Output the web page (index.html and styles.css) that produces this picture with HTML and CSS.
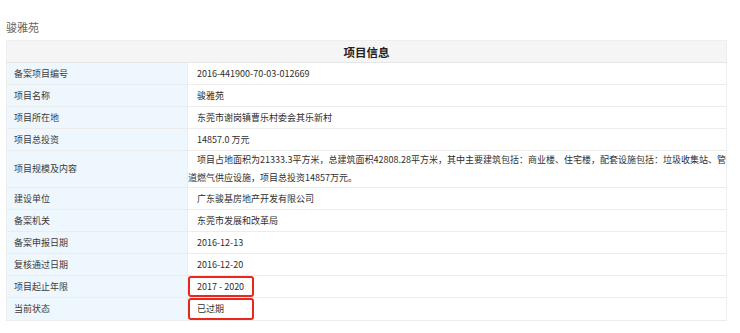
FILE: index.html
```html
<!DOCTYPE html>
<html lang="zh-CN">
<head>
<meta charset="utf-8">
<link rel="stylesheet" href="styles.css">
</head>
<body>
<div class="page">
  <div class="title">骏雅苑</div>
  <table class="info">
    <thead>
      <tr><th colspan="2">项目信息</th></tr>
    </thead>
    <tbody>
      <tr><td class="lbl">备案项目编号</td><td class="val">2016-441900-70-03-012669</td></tr>
      <tr><td class="lbl">项目名称</td><td class="val">骏雅苑</td></tr>
      <tr><td class="lbl">项目所在地</td><td class="val">东莞市谢岗镇曹乐村委会其乐新村</td></tr>
      <tr><td class="lbl">项目总投资</td><td class="val">14857.0 万元</td></tr>
      <tr class="tall"><td class="lbl">项目规模及内容</td><td class="val para">项目占地面积为21333.3平方米，总建筑面积42808.28平方米，其中主要建筑包括：商业楼、住宅楼，配套设施包括：垃圾收集站、管道燃气供应设施，项目总投资14857万元。</td></tr>
      <tr><td class="lbl">建设单位</td><td class="val">广东骏基房地产开发有限公司</td></tr>
      <tr><td class="lbl">备案机关</td><td class="val">东莞市发展和改革局</td></tr>
      <tr><td class="lbl">备案申报日期</td><td class="val">2016-12-13</td></tr>
      <tr><td class="lbl">复核通过日期</td><td class="val">2016-12-20</td></tr>
      <tr><td class="lbl">项目起止年限</td><td class="val"><span class="mark">2017 - 2020</span></td></tr>
      <tr><td class="lbl">当前状态</td><td class="val"><span class="mark mark2">已过期</span></td></tr>
    </tbody>
  </table>
</div>
</body>
</html>
```
FILE: styles.css
```css
html, body {
  margin: 0;
  padding: 0;
  background: #fff;
}
body {
  font-family: "Noto Sans CJK SC", "Noto Sans", sans-serif;
  color: #333;
}
.page {
  padding: 19px 13px 0 6px;
}
.title {
  font-size: 11px;
  line-height: 16px;
  color: #666;
  height: 21px;
}
.info {
  width: 721px;
  border-collapse: collapse;
  border: 1px solid #eeeeee;
  font-size: 9px;
}
.info th {
  background: #f5f5f5;
  font-size: 11.5px;
  font-weight: bold;
  color: #222;
  height: 21px;
  padding: 0;
  border-bottom: 1px solid #e6e6e6;
}
.info td {
  height: 21px;
  padding: 0;
  border-bottom: 1px solid #ececec;
  vertical-align: middle;
  line-height: 12px;
}
.info .lbl {
  width: 181px;
  background: #eef6fe;
  padding-left: 7px;
  box-sizing: border-box;
  color: #3a3a3a;
  border-right: 1px solid #e6eef6;
}
.info .val {
  padding-left: 9px;
  color: #2e2e2e;
}
.info .tall td {
  height: 34px;
}
.info .para {
  padding-left: 0;
  padding-right: 0;
  text-indent: 9px;
  line-height: 18px;
}
.mark {
  display: inline-block;
  margin-left: -9px;
  padding: 0 8px 0 7px;
  height: 17px;
  line-height: 17px;
  border: 2px solid #e8281f;
  border-radius: 3px;
}
.mark2 {
  width: 55px;
  padding-right: 0;
  height: 18px;
  line-height: 18px;
}
```
